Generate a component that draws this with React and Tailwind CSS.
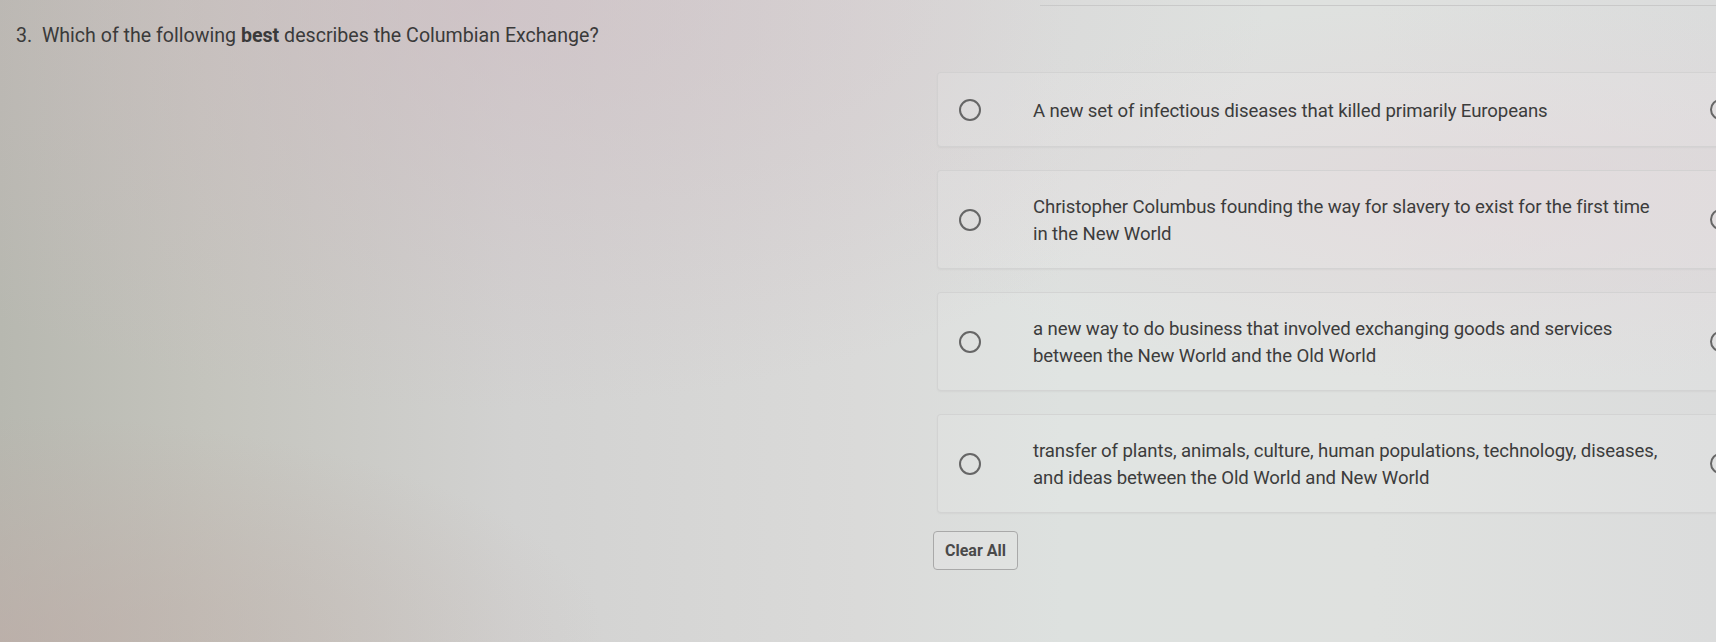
import React from 'react';

const options = [
  ['A new set of infectious diseases that killed primarily Europeans'],
  ['Christopher Columbus founding the way for slavery to exist for the first time', 'in the New World'],
  ['a new way to do business that involved exchanging goods and services', 'between the New World and the Old World'],
  ['transfer of plants, animals, culture, human populations, technology, diseases,', 'and ideas between the Old World and New World'],
];

function Option({ lines }) {
  const tall = lines.length > 1;
  return (
    <div
      className={`flex items-center w-[820px] ${tall ? 'h-[99px]' : 'h-[75px]'} rounded-[4px] border border-[#cdcdcd]/70 bg-white/10 shadow-[0_1px_2px_rgba(0,0,0,0.04)]`}
    >
      <div className="ml-[21px] w-[22px] h-[22px] rounded-full border-2 border-[#666666] shrink-0" />
      <div className="ml-[52px] pt-[3px] text-[18.6px] leading-[27px] text-[#3c3c3c] tracking-[-0.1px]">
        {lines.map((l, i) => (
          <div key={i}>{l}</div>
        ))}
      </div>
      <div className="ml-auto mr-[25px] w-[21px] h-[21px] rounded-full border-2 border-[#666666] shrink-0 flex items-center justify-center">
        <div className="w-[9px] h-[2px] bg-[#666666]" />
      </div>
    </div>
  );
}

export default function App() {
  return (
    <div
      className="relative w-[1716px] h-[642px] overflow-hidden font-['Roboto',sans-serif]
                 bg-[linear-gradient(90deg,#b7b8b0_0%,#c4c4bd_12%,#d2d2d1_30%,#dadad9_50%,#dde1df_62%,#dfe1df_80%,#dbdcdc_100%)]"
    >
      {/* photo tint */}
      <div className="absolute inset-0 bg-[radial-gradient(ellipse_at_28%_0%,rgba(205,185,192,0.55),transparent_45%)] pointer-events-none" />
      <div className="absolute inset-0 bg-[radial-gradient(ellipse_at_0%_100%,rgba(190,170,165,0.6),transparent_25%)] pointer-events-none" />
      <div className="absolute inset-0 bg-[radial-gradient(ellipse_at_88%_30%,rgba(225,212,216,0.6),transparent_30%)] pointer-events-none" />

      <div className="relative flex flex-col">
        <div className="ml-[1040px] h-[6px] border-b border-[#c9c9c9]" />
        <div className="pl-[16px] pt-[18px] text-[19.6px] leading-[24px] text-[#3a3a3a]">
          3.&nbsp; Which of the following <span className="font-bold">best</span> describes the Columbian Exchange?
        </div>

        <div className="ml-[937px] mt-[24px] flex flex-col gap-[23px]">
          {options.map((o, i) => (
            <Option key={i} lines={o} />
          ))}
          <div className="-mt-[5px]">
            <button className="-ml-[4px] h-[39px] px-[11px] rounded-[4px] border border-[#a9a9a9] bg-white/10 text-[16px] font-bold text-[#4a4a4a]">
              Clear All
            </button>
          </div>
        </div>
      </div>
    </div>
  );
}
